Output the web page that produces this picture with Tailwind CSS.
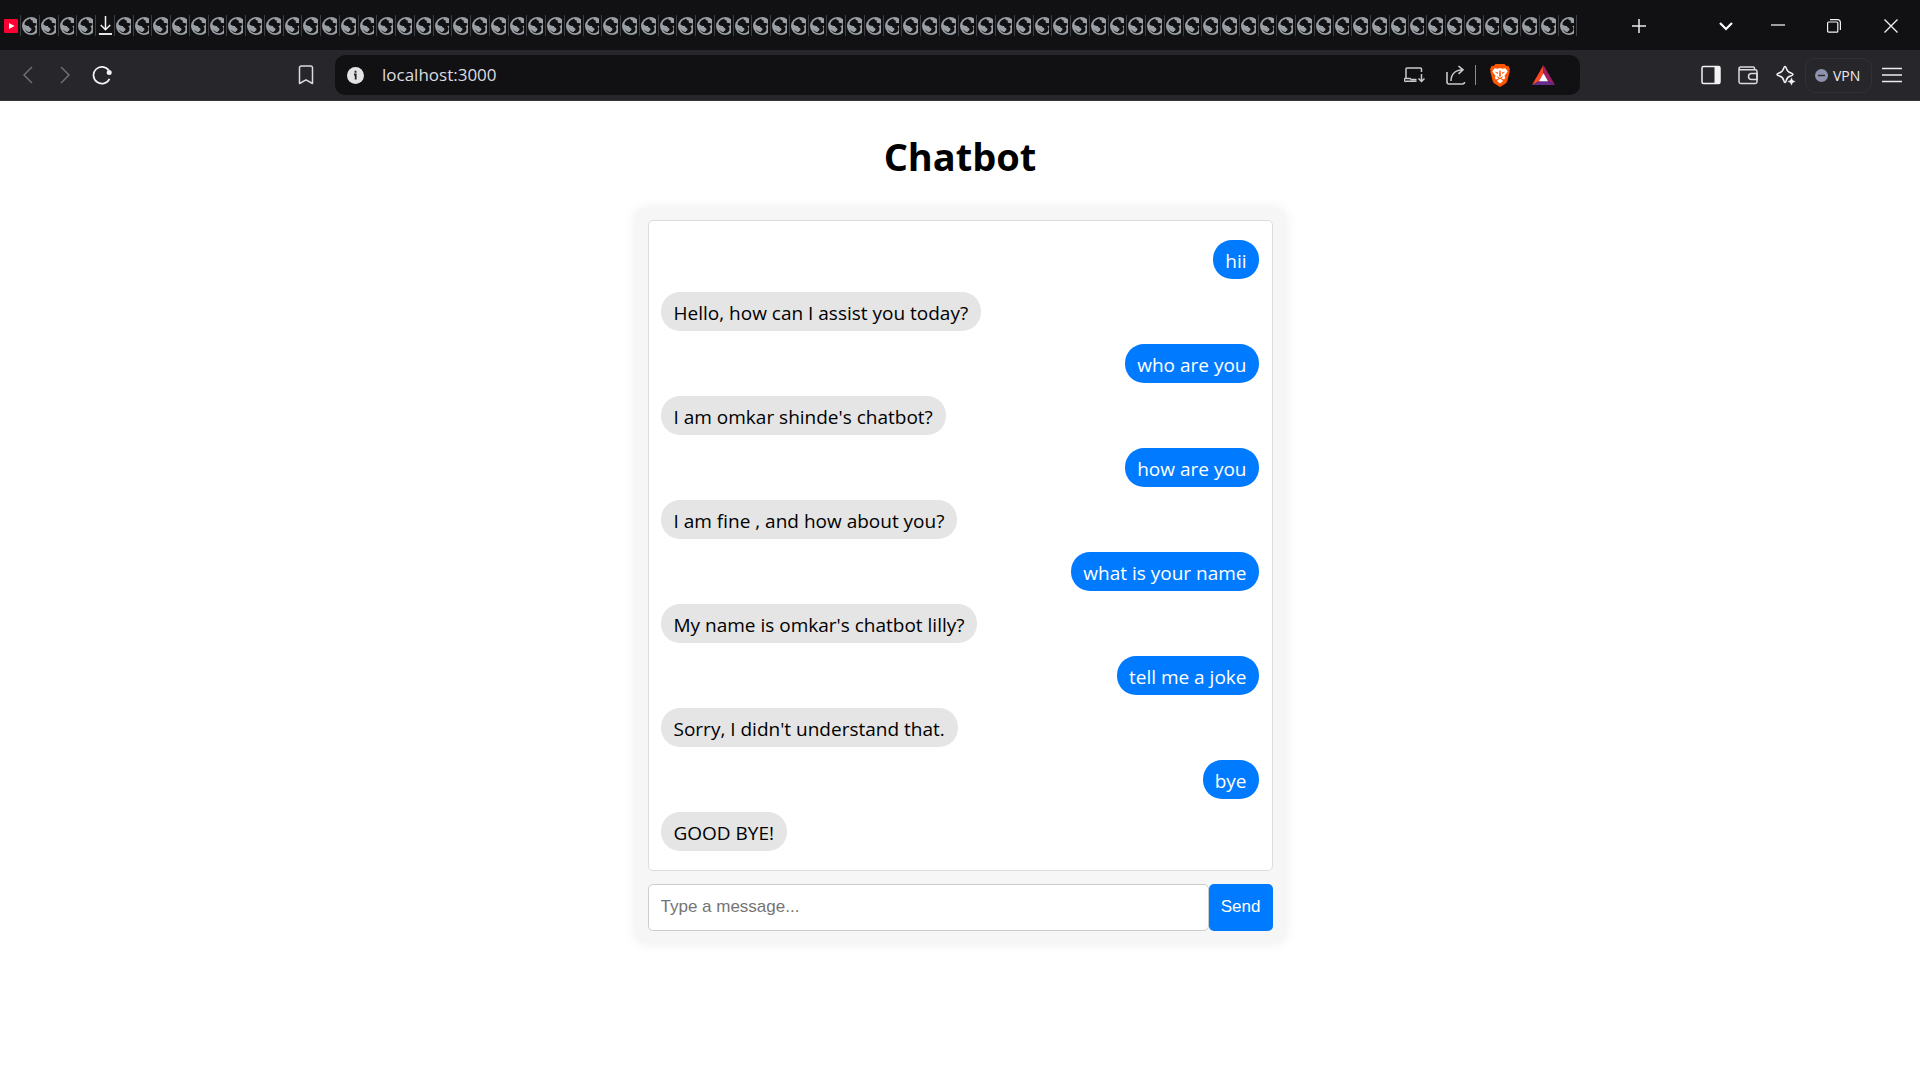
<!DOCTYPE html>
<html lang="en">
<head>
<meta charset="utf-8">
<meta name="viewport" content="width=device-width, initial-scale=1">
<title>Chatbot</title>
<script src="https://cdn.jsdelivr.net/npm/@tailwindcss/browser@4"></script>
</head>
<body class="flex min-h-screen flex-col bg-white font-['Open_Sans','Noto_Sans',sans-serif] text-black">

<svg class="hidden" aria-hidden="true">
  <symbol id="globe" viewBox="0 0 18 18">
    <circle cx="9" cy="9" r="9" fill="#9aa0a6"/>
    <path fill="#111113" d="M8.500 1.500C5 2.500 2.500 4.500 2.500 7.500c1.500 1.500 3 1.500 4.500 1.500 0 2 2.500 1.500 2.500 3.200 0 1.500-1.500 1.500-2 3-2-.3-3.500-1.500-4.500-3 .8 3 4 4.500 6.500 4 3-.6 4-2.500 4-4.500 0-1.500-1-1.700-1-2.700 1.500 0 2-1 2-2.500-1.500-.8-2.500-.3-3.500-.8s.5-1.700-.5-2.200-1.500.2-2-1z"/>
  </symbol>
  <symbol id="download" viewBox="0 0 18 22">
    <path d="M9 1v14M4 10.500l5 5 5-5" fill="none" stroke="#f3f3f4" stroke-width="1.600"/>
    <path d="M2 20h14" stroke="#f3f3f4" stroke-width="2"/>
  </symbol>
</svg>

<header class="text-[#ececee]">
  <div class="flex h-[50px] items-center bg-[#111113] pt-px">
    <div class="flex w-5 shrink-0 justify-end pr-[2px]">
      <svg class="h-[14px] w-[14px]" viewBox="0 0 14 14" aria-label="YouTube"><rect width="14" height="14" rx="1" fill="#ff0033"/><path d="M5 4l5.500 3L5 10z" fill="#fff"/></svg>
    </div>
    <div id="tabs" class="flex h-[21px] min-w-0 flex-1 border-r border-[#3d3d42]"></div>
    <div class="flex w-[343px] shrink-0 items-center">
      <button class="ml-[53px] flex w-[18px] justify-center" aria-label="New tab"><svg class="size-[14px] shrink-0" viewBox="0 0 14 14"><path d="M7 0v14M0 7h14" stroke="#ececee" stroke-width="1.500"/></svg></button>
      <button class="ml-[70px] flex w-[16px] justify-center" aria-label="Search tabs"><svg class="h-[10px] w-[14px]" viewBox="0 0 14 10"><path d="M1 2l6 6 6-6" fill="none" stroke="#fff" stroke-width="2.200"/></svg></button>
      <button class="ml-[37px] flex h-[14px] w-[14px]" aria-label="Minimize"><svg class="size-[14px]" viewBox="0 0 14 14"><path d="M0 6h14" stroke="#fff" stroke-width="1.200"/></svg></button>
      <button class="ml-[42px] flex w-[14px]" aria-label="Restore"><svg class="size-[14px]" viewBox="0 0 14 14" fill="none" stroke="#f3f3f4" stroke-width="1.200"><rect x=".6" y="3" width="10.200" height="10.200" rx="1"/><path d="M3 .7h7.500a3 3 0 0 1 2.900 2.900V11"/></svg></button>
      <button class="ml-[43px] flex w-[14px]" aria-label="Close"><svg class="size-[14px]" viewBox="0 0 14 14"><path d="M.5.5l13 13M13.500.5l-13 13" stroke="#f3f3f4" stroke-width="1.300"/></svg></button>
    </div>
  </div>

  <div class="flex h-[51px] items-center border-b border-[#35343a] bg-[#27262b]">
    <div class="flex w-[335px] shrink-0 items-center pl-[22px]">
      <button aria-label="Back"><svg class="h-[18px] w-[11px]" viewBox="0 0 11 18"><path d="M10 1L2 9l8 8" fill="none" stroke="#6f6e74" stroke-width="1.500"/></svg></button>
      <button class="ml-[27px]" aria-label="Forward"><svg class="h-[18px] w-[11px]" viewBox="0 0 11 18"><path d="M1 1l8 8-8 8" fill="none" stroke="#6f6e74" stroke-width="1.500"/></svg></button>
      <button class="ml-[21px]" aria-label="Reload"><svg class="size-5" viewBox="0 0 20 20"><path d="M17.500 13.800A8.400 8.400 0 1 1 16.800 5.400" fill="none" stroke="#f3f3f4" stroke-width="1.700"/><circle cx="17.200" cy="7.400" r="2.500" fill="#f3f3f4"/></svg></button>
      <button class="ml-[186px]" aria-label="Bookmark"><svg class="h-5 w-4" viewBox="0 0 16 20"><path d="M1.500 3A1.800 1.800 0 0 1 3.300 1h9.400a1.800 1.800 0 0 1 1.800 2v15.500L8 14.800l-6.500 3.700z" fill="none" stroke="#dcdce0" stroke-width="1.500" stroke-linejoin="round"/></svg></button>
    </div>
    <div class="flex h-10 min-w-0 flex-1 items-center rounded-[10px] bg-[#111113] pl-3">
      <svg class="size-[17px] shrink-0" viewBox="0 0 17 17"><circle cx="8.500" cy="8.500" r="8.500" fill="#e3e3e6"/><path d="M7 7.500h1.700v5M8.500 3.800v2" fill="none" stroke="#222" stroke-width="1.800"/></svg>
      <input aria-label="Address" value="localhost:3000" class="ml-[18px] min-w-0 flex-1 bg-transparent text-[17px] leading-6 text-[#dcdce0] outline-none">
      <div class="flex shrink-0 items-center pr-[25px]">
        <button aria-label="Install"><svg class="h-4 w-[21px]" viewBox="0 0 21 16" fill="none" stroke="#c9c9cd" stroke-width="1.500"><path d="M17.500 5V2a1 1 0 0 0-1-1H3a1 1 0 0 0-1 1v9.500M12.500 14.200H2.500a1.500 1.500 0 0 1-1.500-2.700h5l1.200 1h5.300"/><path d="M17.500 7v7.500M14.500 11.500l3 3 3-3"/></svg></button>
        <button class="ml-[21px]" aria-label="Share"><svg class="h-5 w-[20px]" viewBox="0 0 20 20" fill="none" stroke="#c9c9cd" stroke-width="1.600"><path d="M1 7v10a2 2 0 0 0 2 2h13.500a2 2 0 0 0 2-2"/><path d="M5 16c0-6.500 4-11 12-11.200M12.500 1l4.500 3.800-4.500 4"/></svg></button>
        <span class="ml-[9px] h-5 w-px bg-[#8a8a8f]"></span>
        <button class="ml-[14px]" aria-label="Brave Shields"><svg class="h-[23px] w-5" viewBox="0 0 20 23"><path d="M5.500 0h9l1.800 2 2-.2L20 5l-.7 2 .3 1-2.300 9c-.5 1.500-1.300 2.300-2.500 3.100L10 23l-4.800-2.900c-1.200-.8-2-1.600-2.500-3.100L.4 8l.3-1L0 5l1.700-3.200 2 .2z" fill="#ff5500"/><path d="M4.500 4.200l3 .5L10 4l2.500.7 3-.5 2.200 3.300-3.200 4.300.8 2.200-1.300 1.500-2.200-.7-.6.700 2 1.500L10 19.500 6.800 17l2-1.500-.6-.7-2.200.7L4.700 14l.8-2.200-3.200-4.300z" fill="#fff"/><path d="M4.800 7.800l3.400.8-.5 1.500zM15.200 7.800l-3.400.8.5 1.500zM9.400 6.500h1.200l.3 6H9.100zM7 12l3 2 3-2-1.200 2.500L10 15.300l-1.800-.8z" fill="#ff5500"/></svg></button>
        <button class="ml-[22px]" aria-label="Brave Rewards"><svg class="h-5 w-[23px]" viewBox="0 0 23 20"><path d="M11.500 0L0 20l7.500-4 4-7z" fill="#ff4724"/><path d="M11.500 0L23 20l-7.500-4-4-7z" fill="#9e1f63"/><path d="M0 20h23l-7.500-4h-8z" fill="#662d91"/><path d="M11.500 8.200L16 16.200H7z" fill="#fff"/></svg></button>
      </div>
    </div>
    <div class="flex w-[340px] shrink-0 items-center justify-end pr-[18px]">
      <button aria-label="Sidebar"><svg class="size-5" viewBox="0 0 20 20"><rect x="1" y="1.500" width="18" height="17" rx="1.500" fill="none" stroke="#f3f3f4" stroke-width="1.500"/><path d="M13.500 1.500H19v17h-5.500z" fill="#f3f3f4"/></svg></button>
      <button class="ml-[17px]" aria-label="Wallet"><svg class="h-5 w-5" viewBox="0 0 20 20" fill="none" stroke="#dcdce0" stroke-width="1.500"><path d="M16.500 4.500V3A1.200 1.200 0 0 0 15.300 2H2.500A1.500 1.500 0 0 0 1 3.300v13.500a1.700 1.700 0 0 0 1.700 1.700h14.600a1.700 1.700 0 0 0 1.700-1.700V6.500a1.700 1.700 0 0 0-1.700-1.700H2.500Q1 4.800 1 3.300"/><path d="M19 8.500h-5.500a3 3 0 0 0 0 6H19z"/></svg></button>
      <button class="ml-[17px]" aria-label="Leo AI"><svg class="size-[21px]" viewBox="0 0 21 21"><path d="M10 1.500c.6 0 .9.500 1.200 1.500.8 3 1.800 4.200 4.800 5 1 .3 2 .7 2 1.500s-1 1-2 1.300c-3 .8-4 1.800-4.800 4.700-.3 1.200-.6 2-1.200 2s-.9-.8-1.200-2c-.8-2.900-1.800-3.900-4.800-4.700-1-.3-2-.6-2-1.300s1-1.200 2-1.500c3-.8 4-2 4.800-5 .3-1 .6-1.500 1.200-1.500z" fill="none" stroke="#f3f3f4" stroke-width="1.500"/><path d="M16.500 12l1.400 3.100 3.100 1.400-3.100 1.400-1.400 3.100-1.400-3.100-3.100-1.400 3.100-1.400z" fill="#f3f3f4" stroke="#27262b" stroke-width=".5"/></svg></button>
      <button class="ml-[9px] flex h-[35px] w-[67px] items-center gap-[5px] rounded-[10px] border border-[#323137] pl-[9px] text-[14px] text-[#ececee]"><svg class="size-[13px] shrink-0" viewBox="0 0 13 13"><circle cx="6.500" cy="6.500" r="6.500" fill="#8f92ac"/><path d="M3 6.500h7" stroke="#27262b" stroke-width="1.400"/></svg>VPN</button>
      <button class="ml-[10px]" aria-label="Menu"><svg class="h-4 w-[20px]" viewBox="0 0 20 16"><path d="M0 1.500h20M0 8h20M0 14.500h20" stroke="#ececee" stroke-width="1.500"/></svg></button>
    </div>
  </div>
</header>

<main class="flex flex-col items-center pt-[27px]">
  <h1 class="text-[38px] leading-[56px] font-bold">Chatbot</h1>
  <section class="mt-6 w-full max-w-[651px] rounded-[10px] bg-[#f6f6f6] px-[13px] py-3 shadow-[0_0_13px_rgba(0,0,0,0.07)]">
    <div class="flex flex-col gap-[13px] rounded-[5px] border border-[#dcdcdc] bg-white py-[19px] pr-[13px] pl-3 text-[19px] leading-6">
      <p class="self-end rounded-[19px] bg-[#007bff] px-3 pt-[9px] pb-[6px] text-white">hii</p>
      <p class="self-start rounded-[19px] bg-[#e5e5e5] px-[13px] pt-[9px] pb-[6px]">Hello, how can I assist you today?</p>
      <p class="self-end rounded-[19px] bg-[#007bff] px-3 pt-[9px] pb-[6px] text-white">who are you</p>
      <p class="self-start rounded-[19px] bg-[#e5e5e5] px-[13px] pt-[9px] pb-[6px]">I am omkar shinde's chatbot?</p>
      <p class="self-end rounded-[19px] bg-[#007bff] px-3 pt-[9px] pb-[6px] text-white">how are you</p>
      <p class="self-start rounded-[19px] bg-[#e5e5e5] px-[13px] pt-[9px] pb-[6px]">I am fine , and how about you?</p>
      <p class="self-end rounded-[19px] bg-[#007bff] px-3 pt-[9px] pb-[6px] text-white">what is your name</p>
      <p class="self-start rounded-[19px] bg-[#e5e5e5] px-[13px] pt-[9px] pb-[6px]">My name is omkar's chatbot lilly?</p>
      <p class="self-end rounded-[19px] bg-[#007bff] px-3 pt-[9px] pb-[6px] text-white">tell me a joke</p>
      <p class="self-start rounded-[19px] bg-[#e5e5e5] px-[13px] pt-[9px] pb-[6px]">Sorry, I didn't understand that.</p>
      <p class="self-end rounded-[19px] bg-[#007bff] px-3 pt-[9px] pb-[6px] text-white">bye</p>
      <p class="self-start rounded-[19px] bg-[#e5e5e5] px-[13px] pt-[9px] pb-[6px]">GOOD BYE!</p>
    </div>
    <form class="mt-[13px] flex h-[47px] font-['Liberation_Sans',sans-serif] text-[17px]">
      <input aria-label="Message" placeholder="Type a message..." class="min-w-0 flex-1 rounded-[5px] border border-[#cccccc] bg-white px-3 pb-px placeholder:text-[#757575]">
      <button type="button" class="w-16 rounded-[5px] bg-[#007bff] pb-px text-white">Send</button>
    </form>
  </section>
</main>

<script>
  const tabs = document.getElementById('tabs');
  for (let i = 0; i < 83; i++) {
    const icon = i === 4 ? 'download' : 'globe';
    const size = i === 4 ? 'h-[21px] w-[17px]' : 'size-[18px]';
    tabs.insertAdjacentHTML('beforeend',
      `<div class="flex min-w-0 flex-1 items-center overflow-hidden border-l border-[#3d3d42] pr-[2px]"><div class="flex min-w-0 flex-1 items-center overflow-hidden pl-px"><svg class="${size} shrink-0"><use href="#${icon}"/></svg></div></div>`);
  }
</script>
</body>
</html>
